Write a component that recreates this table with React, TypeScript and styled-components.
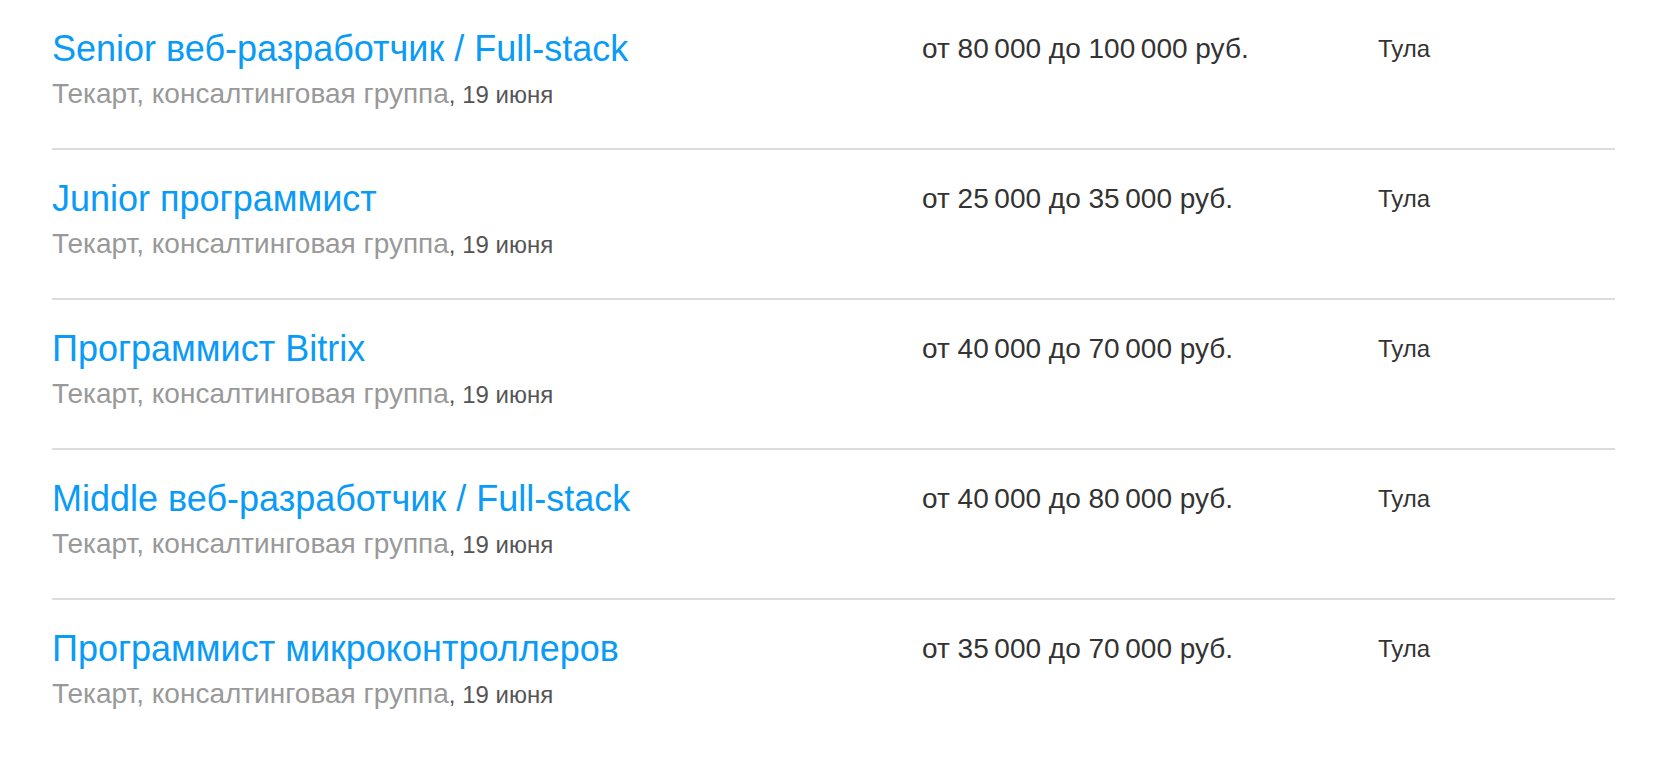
import styled, { createGlobalStyle } from "styled-components";

const GlobalStyle = createGlobalStyle`
  html, body {
    margin: 0;
    padding: 0;
    background: #fff;
  }
  body {
    font-family: "Liberation Sans", Arial, sans-serif;
  }
`;

const List = styled.ul`
  list-style: none;
  margin: 0;
  padding: 0 51px 0 52px;
  width: 1563px;
`;

const Row = styled.li`
  display: grid;
  grid-template-columns: 870px 456px 1fr;
  align-items: start;
  padding: 29px 0 36px;
  border-bottom: 2px solid #dcdcdc;

  &:last-child {
    border-bottom: none;
  }
`;

const Info = styled.div`
  display: flex;
  flex-direction: column;
  gap: 9px;
`;

const Title = styled.a`
  font-size: 36px;
  line-height: 40px;
  color: #0a9bf7;
  text-decoration: none;
`;

const Meta = styled.div`
  font-size: 24px;
  line-height: 34px;
  color: #555;
`;

const Company = styled.span`
  font-size: 28px;
  line-height: 1;
  color: #999;
`;

const Salary = styled.div`
  font-size: 28px;
  line-height: 40px;
  color: #333;
`;

const City = styled.div`
  font-size: 24px;
  line-height: 40px;
  color: #333;
`;

type Vacancy = {
  title: string;
  salary: string;
};

const vacancies: Vacancy[] = [
  { title: "Senior веб-разработчик / Full-stack", salary: "от 80\u2009000 до 100\u2009000 руб." },
  { title: "Junior программист", salary: "от 25\u2009000 до 35\u2009000 руб." },
  { title: "Программист Bitrix", salary: "от 40\u2009000 до 70\u2009000 руб." },
  { title: "Middle веб-разработчик / Full-stack", salary: "от 40\u2009000 до 80\u2009000 руб." },
  { title: "Программист микроконтроллеров", salary: "от 35\u2009000 до 70\u2009000 руб." },
];

export default function App() {
  return (
    <>
      <GlobalStyle />
      <List>
        {vacancies.map((v) => (
          <Row key={v.title}>
            <Info>
              <Title href="#">{v.title}</Title>
              <Meta>
                <Company>Текарт, консалтинговая группа</Company>, 19 июня
              </Meta>
            </Info>
            <Salary>{v.salary}</Salary>
            <City>Тула</City>
          </Row>
        ))}
      </List>
    </>
  );
}
